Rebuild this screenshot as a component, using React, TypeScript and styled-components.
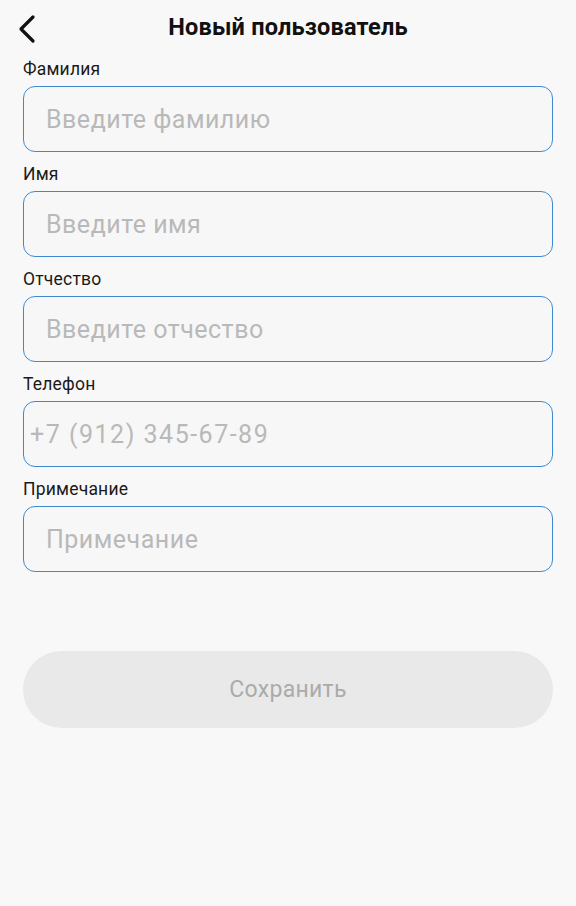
import React from 'react';
import styled, { createGlobalStyle } from 'styled-components';

const GlobalStyle = createGlobalStyle`
  body {
    margin: 0;
    background: #f8f8f8;
    font-family: Roboto, 'Noto Sans', sans-serif;
  }
`;

//전체 화면
const Screen = styled.div`
  width: 576px;
  min-height: 906px;
  background: #f8f8f8;
  display: flex;
  flex-direction: column;
`;

//상단 헤더
const Header = styled.header`
  position: relative;
  height: 58px;
  display: flex;
  align-items: center;
  justify-content: center;
`;

const BackButton = styled.button`
  position: absolute;
  left: 12px;
  top: 11px;
  width: 30px;
  height: 36px;
  padding: 0;
  border: none;
  background: none;
  display: flex;
  align-items: center;
  justify-content: center;
`;

const Title = styled.h1`
  margin: 0;
  margin-top: -4px;
  font-size: 23.5px;
  font-weight: 700;
  letter-spacing: 0.2px;
  color: #111;
`;

const Form = styled.form`
  display: flex;
  flex-direction: column;
  gap: 11px;
  padding: 0 23px;
`;

const Field = styled.label`
  display: flex;
  flex-direction: column;
  gap: 6px;
`;

const LabelText = styled.span`
  font-size: 17.5px;
  line-height: 22px;
  letter-spacing: 0.2px;
  color: #1a1a1a;
`;

const Input = styled.input<{ $pad?: number; $spacing?: number }>`
  box-sizing: border-box;
  height: 66px;
  width: 100%;
  border: 1.5px solid #3f89d3;
  border-radius: 12px;
  background: #f7f7f7;
  padding: 0 0 0 ${p => p.$pad ?? 22}px;
  font-family: Roboto, 'Noto Sans', sans-serif;
  font-size: 25px;
  letter-spacing: ${p => p.$spacing ?? 0.5}px;
  color: #222;
  outline: none;
  &::placeholder {
    color: #b9b9b9;
  }
`;

const SaveButton = styled.button`
  margin: 79px 23px 0;
  height: 77px;
  border: none;
  border-radius: 40px;
  background: #e9e9e9;
  color: #ababab;
  font-family: Roboto, 'Noto Sans', sans-serif;
  font-size: 23px;
  letter-spacing: 0.3px;
`;

const fields = [
  { label: 'Фамилия', placeholder: 'Введите фамилию' },
  { label: 'Имя', placeholder: 'Введите имя' },
  { label: 'Отчество', placeholder: 'Введите отчество' },
  { label: 'Телефон', placeholder: '+7 (912) 345-67-89', pad: 6, spacing: 1.5 },
  { label: 'Примечание', placeholder: 'Примечание' },
];

const App = () => {
  return (
    <Screen>
      <GlobalStyle />
      <Header>
        <BackButton type='button'>
          <svg width='20' height='30' viewBox='0 0 20 30'>
            <path d='M16 3 L4 15 L16 27' fill='none' stroke='#111' strokeWidth='3.2' strokeLinecap='round' strokeLinejoin='round' />
          </svg>
        </BackButton>
        <Title>Новый пользователь</Title>
      </Header>
      <Form>
        {fields.map(f => (
          <Field key={f.label}>
            <LabelText>{f.label}</LabelText>
            <Input placeholder={f.placeholder} $pad={f.pad} $spacing={f.spacing} />
          </Field>
        ))}
      </Form>
      <SaveButton type='button'>Сохранить</SaveButton>
    </Screen>
  );
};
export default App;
